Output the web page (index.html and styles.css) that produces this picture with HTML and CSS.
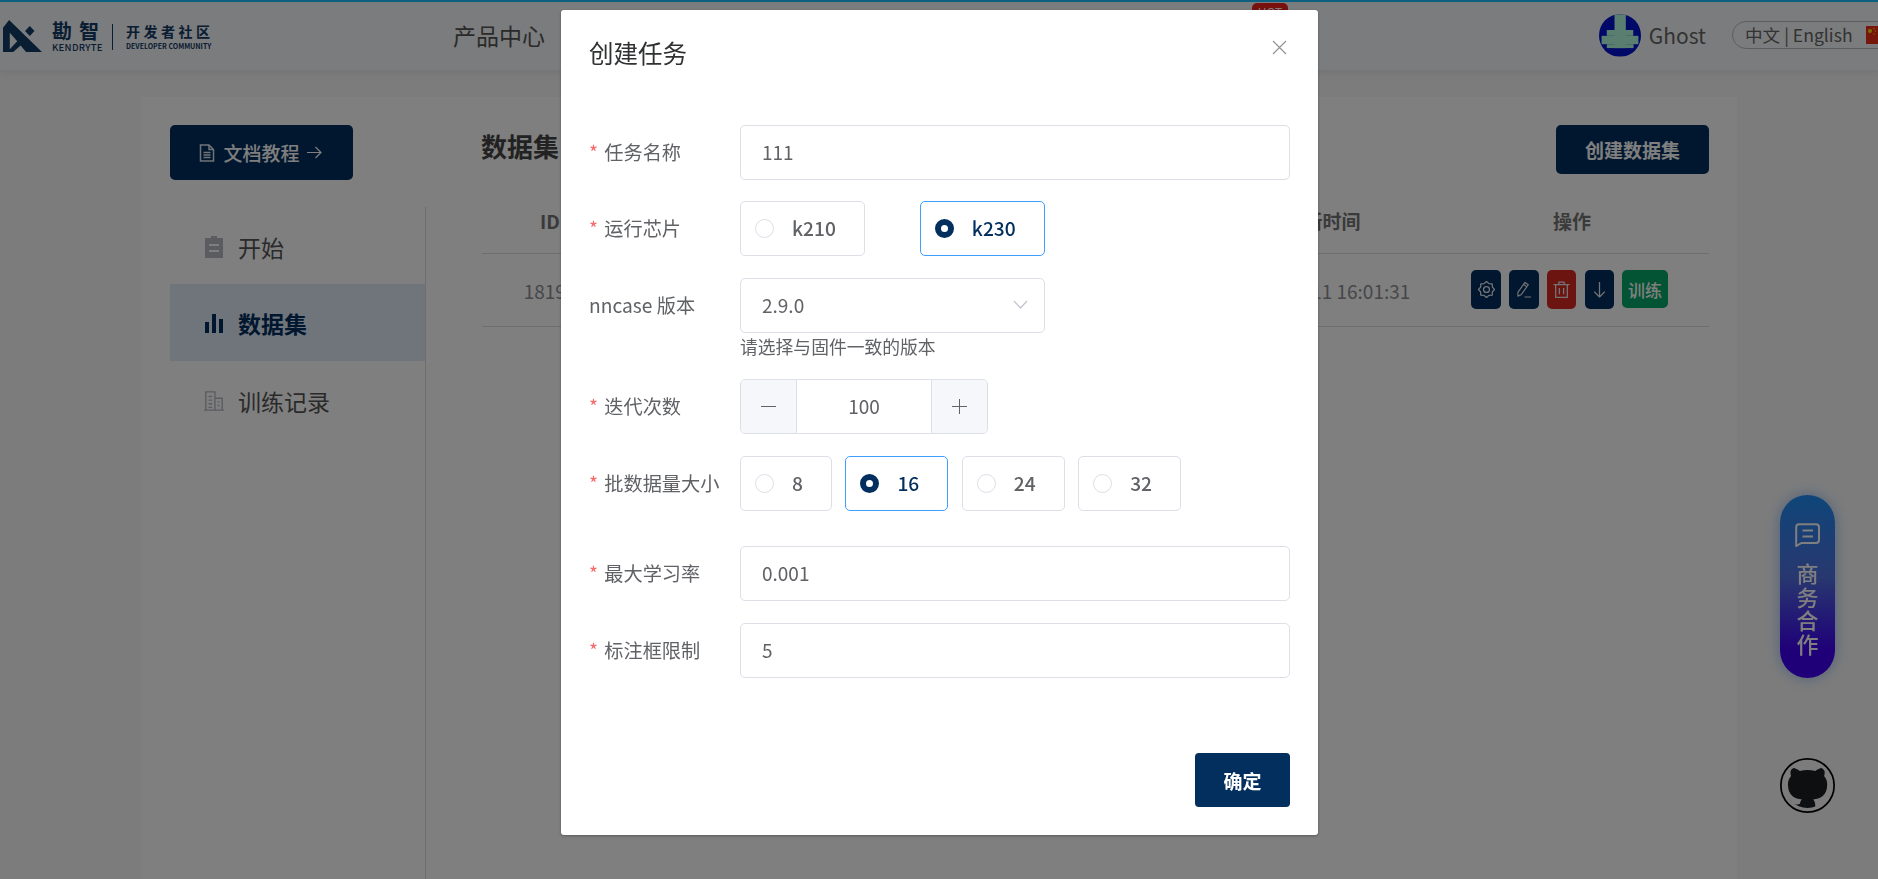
FILE: index.html
```html
<!DOCTYPE html>
<html lang="zh-CN">
<head>
<meta charset="utf-8">
<title>创建任务</title>
<link rel="stylesheet" href="styles.css">
</head>
<body>
<header class="topbar">
  <div class="brand">
    <svg class="brand-mark" viewBox="10 20 115 90" preserveAspectRatio="none" aria-hidden="true">
      <path fill-rule="evenodd" d="M10 42 28 20 125 110H78L62 92 40 110H10Z M30 56 52 80 30 102Z"/>
      <path d="M89 37 103 51 89 65 75 51Z"/>
    </svg>
    <div class="brand-name">
      <span class="brand-cn">勘智</span>
      <span class="brand-en">KENDRYTE</span>
    </div>
    <div class="brand-sep"></div>
    <div class="brand-sub">
      <span class="brand-sub-cn">开发者社区</span>
      <span class="brand-sub-en">DEVELOPER COMMUNITY</span>
    </div>
  </div>
  <nav class="nav">
    <span class="nav-item">产品中心</span>
    <span class="hot">HOT</span>
  </nav>
  <div class="user">
    <svg class="avatar" viewBox="0 0 130 130" aria-hidden="true">
      <rect width="130" height="130" fill="#0010d0"/>
      <rect x="48" width="35" height="104" fill="#b4ffe0"/>
      <rect x="24" y="48" width="82" height="18" fill="#b4ffe0"/>
      <rect x="8" y="66" width="114" height="26" fill="#b4ffe0"/>
      <rect x="24" y="92" width="83" height="12" fill="#b4ffe0"/>
    </svg>
    <span class="user-name">Ghost</span>
  </div>
  <div class="lang">
    <span>中文 | English</span>
    <svg class="flag" viewBox="0 0 12 18" aria-hidden="true">
      <rect width="12" height="18" fill="#ee2f16"/>
      <circle cx="4" cy="5" r="2" fill="#ffde00"/>
      <circle cx="8" cy="2.500" r=".7" fill="#ffde00"/>
      <circle cx="9.500" cy="5" r=".7" fill="#ffde00"/>
      <circle cx="8" cy="8" r=".7" fill="#ffde00"/>
    </svg>
  </div>
</header>

<main class="card">
  <a class="doc-btn">
    <svg class="doc-icon" viewBox="0 0 16 18" aria-hidden="true">
      <path d="M1.500 1H10L14.500 5.500V17H1.500Z M10 1V5.500H14.500 M4.500 8.500H11.500 M4.500 11H11.500 M4.500 13.500H11.500"/>
    </svg>
    <span>文档教程</span>
    <svg class="doc-arrow" viewBox="0 0 15 13" aria-hidden="true"><path d="M0 6.500H14 M8.500 1 14 6.500 8.500 12"/></svg>
  </a>
  <div class="title-row">
    <h2 class="page-title">数据集</h2>
    <a class="create-btn">创建数据集</a>
  </div>
  <aside class="menu">
    <div class="menu-item">
      <svg class="menu-icon" viewBox="0 0 20 22" aria-hidden="true">
        <path fill="#b4b8c0" d="M7 0H13V2H19V22H1V2H7Z"/>
        <path fill="#fff" d="M5 8H15V10H5Z M5 14H15V16H5Z"/>
      </svg>
      <span>开始</span>
    </div>
    <div class="menu-item active">
      <svg class="menu-icon" viewBox="0 0 20 22" aria-hidden="true">
        <path fill="#022f5e" d="M1 10H5V21H1Z M8 2H12V21H8Z M15 7H19V21H15Z"/>
      </svg>
      <span>数据集</span>
    </div>
    <div class="menu-item">
      <svg class="menu-icon" viewBox="0 0 22 22" aria-hidden="true">
        <path fill="none" stroke="#b4b8c0" stroke-width="1.500" d="M0 21H22 M2 21V1H12V21 M12 8H20V21 M5 6H9 M5 10H9 M5 14H9 M5 18H9 M15 12H17 M15 16H17"/>
      </svg>
      <span>训练记录</span>
    </div>
  </aside>
  <section class="table">
    <div class="t-row t-head">
      <span>ID</span><span>名称</span><span class="t-time">更新时间</span><span class="t-ops">操作</span>
    </div>
    <div class="t-row t-body">
      <span>18192</span><span>数据集</span><span class="t-time">2024-06-11 16:01:31</span>
      <div class="actions">
        <a class="act navy w30">
          <svg class="act-icon" viewBox="0 0 16 16" aria-hidden="true"><path d="M15.600 8 13.540 10.300 13.370 13.370 10.300 13.540 8 15.600 5.700 13.540 2.630 13.370 2.460 10.300 .4 8 2.460 5.700 2.630 2.630 5.700 2.460 8 .4 10.300 2.460 13.370 2.630 13.540 5.700Z"/><circle cx="8" cy="8" r="2.800"/></svg>
        </a>
        <a class="act navy w30">
          <svg class="act-icon" viewBox="0 0 16 18" aria-hidden="true"><path d="M1 12 8.500 1.500 12 4 4.500 14.500 1 16Z M7 3.500 10.500 6 M8 17H15"/></svg>
        </a>
        <a class="act red w29">
          <svg class="act-icon" viewBox="0 0 16 16" aria-hidden="true"><path d="M.5 3.500H15.500 M5.500 3.500V1H10.500V3.500 M2.500 3.500V15.500H13.500V3.500 M6 6.500V12.500 M10 6.500V12.500"/></svg>
        </a>
        <a class="act navy w29 shift">
          <svg class="act-icon" viewBox="0 0 16 16" aria-hidden="true"><path d="M8 1V15 M3 10 8 15 13 10"/></svg>
        </a>
        <a class="act green">训练</a>
      </div>
    </div>
  </section>
</main>

<div class="float-pill">
  <svg class="pill-icon" viewBox="0 0 25 24" aria-hidden="true"><path d="M4 1.200H21A3 3 0 0 1 24 4.200V17A3 3 0 0 1 21 20H6.500L1.200 23V4A3 3 0 0 1 4 1.200Z M7.500 7.500H18 M7.500 13.500H18"/></svg>
  <span class="pill-text">商务合作</span>
</div>
<a class="github">
  <svg viewBox="-1.500 -1.500 19 19" aria-hidden="true">
    <defs><clipPath id="disc"><circle cx="8" cy="8" r="7.800"/></clipPath></defs>
    <circle class="gh-ring" cx="8" cy="8" r="9.200"/>
    <g clip-path="url(#disc)">
      <path class="gh-cat" fill-rule="evenodd" d="M-8-8H24V24H-8Z M8 0C3.580 0 0 3.580 0 8c0 3.540 2.290 6.530 5.470 7.590.4.070.55-.17.55-.38 0-.19-.01-.82-.01-1.490-2.010.37-2.530-.49-2.690-.94-.09-.23-.48-.94-.82-1.130-.28-.15-.68-.52-.01-.53.63-.01 1.080.58 1.230.82.72 1.210 1.870.87 2.330.66.07-.52.28-.87.51-1.070-1.780-.2-3.640-.89-3.640-3.950 0-.87.31-1.590.82-2.150-.08-.2-.36-1.020.08-2.120 0 0 .67-.21 2.200.82.64-.18 1.320-.27 2-.27.68 0 1.360.09 2 .27 1.530-1.040 2.200-.82 2.200-.82.44 1.100.16 1.920.08 2.120.51.56.82 1.270.82 2.150 0 3.070-1.870 3.750-3.650 3.950.29.25.54.73.54 1.480 0 1.070-.01 1.930-.01 2.200 0 .21.15.46.55.38A8.013 8.013 0 0016 8c0-4.420-3.580-8-8-8z"/>
    </g>
  </svg>
</a>

<div class="overlay"></div>

<div class="modal" role="dialog">
  <header class="modal-head">
    <span class="modal-title">创建任务</span>
    <svg class="modal-close" viewBox="0 0 15 15" aria-hidden="true"><path d="M1 1 14 14 M14 1 1 14"/></svg>
  </header>
  <form class="form">
    <div class="row first">
      <label class="label req">任务名称</label>
      <div class="input">111</div>
    </div>
    <div class="row">
      <label class="label req">运行芯片</label>
      <div class="radios wide">
        <div class="radio"><i class="dot"></i><span>k210</span></div>
        <div class="radio on"><i class="dot"></i><span>k230</span></div>
      </div>
    </div>
    <div class="row tight">
      <label class="label">nncase 版本</label>
      <div class="input select">
        <span>2.9.0</span>
        <svg class="chevron" viewBox="0 0 15 9" aria-hidden="true"><path d="M1 1 7.500 8 14 1"/></svg>
      </div>
    </div>
    <div class="help">请选择与固件一致的版本</div>
    <div class="row">
      <label class="label req">迭代次数</label>
      <div class="number">
        <span class="step">
          <svg viewBox="0 0 15 15" aria-hidden="true"><path d="M0 7.500H15"/></svg>
        </span>
        <span class="num-val">100</span>
        <span class="step">
          <svg viewBox="0 0 15 15" aria-hidden="true"><path d="M0 7.500H15 M7.500 0V15"/></svg>
        </span>
      </div>
    </div>
    <div class="row">
      <label class="label req">批数据量大小</label>
      <div class="radios">
        <div class="radio"><i class="dot"></i><span>8</span></div>
        <div class="radio on"><i class="dot"></i><span>16</span></div>
        <div class="radio"><i class="dot"></i><span>24</span></div>
        <div class="radio"><i class="dot"></i><span>32</span></div>
      </div>
    </div>
    <div class="row gap-lg">
      <label class="label req">最大学习率</label>
      <div class="input">0.001</div>
    </div>
    <div class="row">
      <label class="label req">标注框限制</label>
      <div class="input">5</div>
    </div>
  </form>
  <footer class="modal-foot">
    <a class="ok-btn">确定</a>
  </footer>
</div>
</body>
</html>
```

FILE: styles.css
```css
* { box-sizing: border-box; }

html, body {
  margin: 0;
  height: 100%;
  overflow: hidden;
}

body {
  background: #f8f8f8;
  font-family: "Noto Sans CJK SC", "Noto Sans", sans-serif;
  color: #555;
}

a { display: inline-flex; align-items: center; justify-content: center; }

/* top bar */
.topbar {
  height: 70px;
  display: flex;
  align-items: center;
  padding-left: 3px;
  background: #f7f9fb;
  border-top: 2px solid #1abeff;
  box-shadow: 0 2px 8px rgba(0, 0, 0, .08);
  position: relative;
  overflow: hidden;
}

.brand { display: flex; align-items: center; width: 450px; flex-shrink: 0; margin-top: -2px; }
.brand-mark { width: 39px; height: 32px; fill: #123a66; margin-top: 2px; }
.brand-name { display: flex; flex-direction: column; margin-left: 10px; width: 48px; margin-top: 2px; }
.brand-cn { font-size: 20px; line-height: 21px; font-weight: 700; letter-spacing: 7px; color: #123a66; white-space: nowrap; }
.brand-en { font-size: 9.500px; line-height: 10px; margin-top: 1px; color: #123a66; letter-spacing: .3px; font-weight: 500; white-space: nowrap; }
.brand-sep { width: 1px; height: 26px; margin: 4px 13px 0 12px; background: #123a66; }
.brand-sub { display: flex; flex-direction: column; margin-top: 3px; }
.brand-sub-cn { font-size: 14px; line-height: 18px; font-weight: 700; letter-spacing: 3.500px; color: #123a66; white-space: nowrap; }
.brand-sub-en { font-size: 7px; line-height: 12px; font-weight: 700; color: #123a66; white-space: nowrap; }

.nav { position: relative; flex: 1; align-self: stretch; display: flex; align-items: center; margin-top: -2px; }
.nav-item { font-size: 23px; color: #555; }
.hot {
  position: absolute;
  left: 799px;
  top: 3px;
  width: 36px;
  height: 24px;
  border-radius: 5px;
  background: #f0201a;
  color: #fff;
  font-size: 12px;
  text-align: center;
}

.user { display: flex; align-items: center; gap: 8px; margin-right: 26px; margin-top: -2px; }
.avatar { width: 42px; height: 43px; border-radius: 50%; }
.user-name { font-size: 21px; color: #666; }

.lang {
  display: flex;
  align-items: center;
  gap: 13px;
  height: 28px;
  width: 170px;
  margin-right: -24px;
  margin-top: -3px;
  padding-left: 12px;
  flex-shrink: 0;
  border: 1px solid #bbb;
  border-radius: 14px;
  font-size: 17.600px;
  line-height: 26px;
  color: #666;
  white-space: nowrap;
}
.flag { width: 12px; height: 18px; flex-shrink: 0; }

/* page card */
.card {
  width: 1595px;
  height: 782px;
  margin: 27px 0 0 142px;
  padding: 28px 28px 0;
  background: #fff;
  display: grid;
  grid-template-columns: 256px 1fr;
  grid-template-rows: 55px 1fr;
  column-gap: 56px;
  row-gap: 27px;
}

.doc-btn {
  width: 183px;
  height: 55px;
  gap: 7px;
  padding-right: 2px;
  background: #022f5e;
  border-radius: 5px;
  color: #fff;
  font-size: 19px;
  font-weight: 500;
}
.doc-icon { width: 16px; height: 18px; margin-right: 1px; fill: none; stroke: #dfe9f2; stroke-width: 1.500; }
.doc-arrow { width: 15px; height: 13px; fill: none; stroke: #fff; stroke-width: 1.200; }

.title-row { display: flex; justify-content: space-between; align-items: flex-start; }
.page-title { margin: 3px 0 0 -1px; font-size: 26px; line-height: 36px; font-weight: 700; color: #444; }
.create-btn {
  width: 153px;
  height: 49px;
  background: #022f5e;
  border-radius: 5px;
  color: #fff;
  font-size: 19px;
  font-weight: 700;
}

.menu { border-right: 1px solid #ddd; }
.menu-item {
  height: 77px;
  display: flex;
  align-items: center;
  gap: 14px;
  padding: 2px 0 0 34px;
  font-size: 23px;
  color: #555;
}
.menu-item.active { background: #e0eaf6; color: #022f5e; font-weight: 700; padding-top: 0; }
.menu-icon { width: 20px; height: 22px; }

.table { align-self: start; }
.t-row {
  display: grid;
  grid-template-columns: 136px 1fr 210px 274px;
  align-items: center;
  text-align: center;
  border-bottom: 1px solid #ddd;
  white-space: nowrap;
}
.t-head { height: 47px; padding-bottom: 22px; font-size: 19px; font-weight: 700; color: #757575; }
.t-body { height: 73px; font-size: 19px; color: #8c8e92; }
.t-time { padding-right: 15px; }

.actions { display: flex; gap: 8px; padding-left: 36px; margin-top: -1px; }
.act { height: 39px; border-radius: 5px; }
.w30 { width: 30px; }
.w29 { width: 29px; }
.shift { margin-left: 1px; }
.navy { background: #022f5e; }
.red { background: #d92b20; }
.green { width: 46px; height: 38px; background: #04a868; color: #fff; font-size: 17px; font-weight: 500; }
.act-icon { width: 17px; height: 17px; fill: none; stroke: #e8e8ee; stroke-width: 1.200; stroke-linejoin: round; }

/* floating */
.float-pill {
  position: fixed;
  left: 1780px;
  top: 495px;
  width: 55px;
  height: 183px;
  border-radius: 28px;
  background: linear-gradient(180deg, #1f8cf2 0%, #5070e0 45%, #3f00f2 85%);
  box-shadow: 0 0 14px rgba(40, 130, 255, .45);
  display: flex;
  flex-direction: column;
  align-items: center;
  padding-top: 28px;
  color: #fff;
}
.pill-icon { width: 25px; height: 24px; fill: none; stroke: #fff; stroke-width: 2; }
.pill-text { width: 22px; margin-top: 14px; font-size: 22px; line-height: 23.500px; font-weight: 500; }

.github {
  position: fixed;
  left: 1780px;
  top: 758px;
  width: 55px;
  height: 55px;
}
.github svg { width: 55px; height: 55px; }
.gh-ring { fill: none; stroke: #000; stroke-width: .6; }
.gh-cat { fill: #1c1e22; transform: translate(8px, 7.500px) scale(1.33) translate(-8px, -7.500px); }

/* modal */
.overlay { position: fixed; inset: 0; background: rgba(0, 0, 0, .5); }

.modal {
  position: fixed;
  left: 561px;
  top: 10px;
  width: 757px;
  height: 825px;
  padding: 0 28px 0 29px;
  background: #fff;
  border-radius: 3px;
  box-shadow: 0 1px 3px rgba(0, 0, 0, .3);
  display: flex;
  flex-direction: column;
}
.modal-head { position: relative; height: 115px; padding-top: 26px; flex-shrink: 0; }
.modal-title { margin-left: -1px; font-size: 24.500px; line-height: 34px; color: #303133; }
.modal-close {
  position: absolute;
  right: 3px;
  top: 30px;
  width: 15px;
  height: 15px;
  fill: none;
  stroke: #909399;
  stroke-width: 1.200;
}

.form { flex: 1; color: #606266; }
.row { display: flex; align-items: center; height: 55px; margin-bottom: 22px; }
.row.first { margin-bottom: 21px; }
.row.tight { margin-bottom: 0; }
.row.gap-lg { margin-top: 35px; }
.label { width: 150px; margin-left: -1px; margin-right: 1px; flex-shrink: 0; font-size: 19.200px; line-height: 24px; margin-top: -2px; white-space: nowrap; }
.label.req::before { content: "* "; color: #f56c6c; margin-right: 2px; }

.input {
  width: 550px;
  height: 55px;
  display: flex;
  align-items: center;
  padding: 0 21px 3px;
  border: 1px solid #dcdfe6;
  border-radius: 5px;
  font-size: 19px;
  color: #606266;
}
.select { width: 305px; justify-content: space-between; padding-right: 16px; }
.chevron { width: 15px; height: 9px; fill: none; stroke: #c0c4cc; stroke-width: 1.200; margin-top: 1px; }

.help { margin: 1px 0 21px 150px; height: 24px; font-size: 17.800px; line-height: 24px; color: #606266; white-space: nowrap; }

.number {
  width: 248px;
  height: 55px;
  display: flex;
  border: 1px solid #dcdfe6;
  border-radius: 5px;
  overflow: hidden;
}
.step {
  width: 56px;
  display: flex;
  align-items: center;
  justify-content: center;
  flex-shrink: 0;
  background: #f5f7fa;
}
.step:first-child { border-right: 1px solid #dcdfe6; }
.step:last-child { border-left: 1px solid #dcdfe6; }
.step svg { width: 15px; height: 15px; fill: none; stroke: #606266; stroke-width: 1; }
.num-val { flex: 1; display: flex; align-items: center; justify-content: center; font-size: 19px; margin-top: -2px; }

.radios { display: flex; gap: 13.500px; }
.radios.wide { gap: 55px; }
.radio {
  height: 55px;
  display: flex;
  align-items: center;
  padding: 0 28px 0 14px;
  border: 1px solid #dcdfe6;
  border-radius: 5px;
  font-size: 19.200px;
  font-weight: 500;
  color: #606266;
}
.radio span { margin-top: -2px; }
.dot {
  width: 19px;
  height: 19px;
  margin-right: 18px;
  border: 1px solid #dcdfe6;
  border-radius: 50%;
  background: #fff;
  flex-shrink: 0;
}
.radio.on { border-color: #409eff; color: #022f5e; }
.radio.on .dot { border: 6.500px solid #022f5e; }

.modal-foot { display: flex; justify-content: flex-end; height: 82px; flex-shrink: 0; }
.ok-btn {
  width: 95px;
  height: 54px;
  background: #022f5e;
  border-radius: 4px;
  color: #fff;
  font-size: 19px;
  font-weight: 700;
}
```
